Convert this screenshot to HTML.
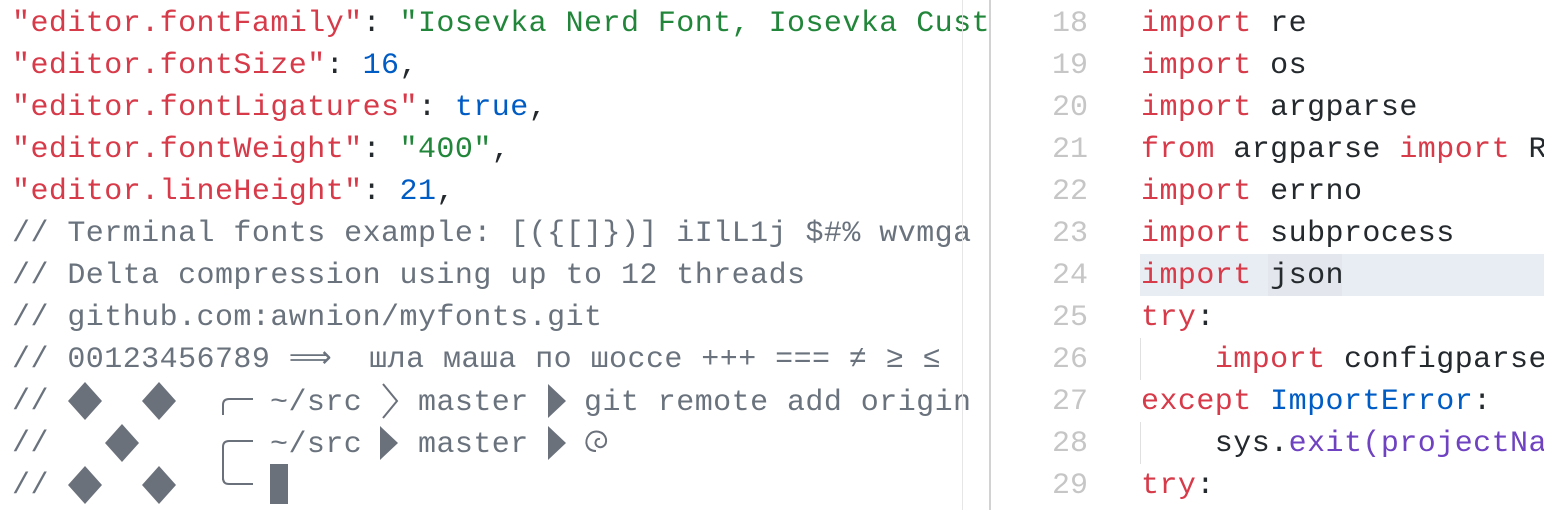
<!DOCTYPE html>
<html><head><meta charset="utf-8"><style>
html,body{margin:0;padding:0;background:#fff;width:1544px;height:510px;overflow:hidden}
body{position:relative;font-family:"Liberation Mono","DejaVu Sans Mono",monospace;font-size:30px;letter-spacing:0.45px}
.pane{position:absolute;top:3px;white-space:pre;line-height:42px}
#left{left:12px;width:976px;overflow:hidden;color:#6a737d}
.s{color:#d73a49}.g{color:#22863a}.b{color:#005cc5}.k{color:#24292e}.p{color:#6f42c1}
#nums{left:1000px;width:88px;text-align:right;color:#c6c6c6;letter-spacing:0}
#right{left:1141px;width:403px;overflow:hidden;color:#24292e}
.abs{position:absolute;white-space:pre;line-height:42px;color:#6a737d}
</style></head><body>
<div style="position:absolute;left:1140px;top:254px;width:404px;height:42px;background:#e8edf4"></div>
<div style="position:absolute;left:1268px;top:254px;width:74px;height:42px;background:#e3e6ec"></div>
<div style="position:absolute;left:1140px;top:338px;width:1px;height:42px;background:#e0e0e0"></div>
<div style="position:absolute;left:1140px;top:422px;width:1px;height:42px;background:#e0e0e0"></div>
<div class="pane" id="left"><span class="s">"editor.fontFamily"</span><span class="k">: </span><span class="g">"Iosevka Nerd Font, Iosevka Custom"</span>
<span class="s">"editor.fontSize"</span><span class="k">: </span><span class="b">16</span><span class="k">,</span>
<span class="s">"editor.fontLigatures"</span><span class="k">: </span><span class="b">true</span><span class="k">,</span>
<span class="s">"editor.fontWeight"</span><span class="k">: </span><span class="g">"400"</span><span class="k">,</span>
<span class="s">"editor.lineHeight"</span><span class="k">: </span><span class="b">21</span><span class="k">,</span>
// Terminal fonts example: [({[]})] iIlL1j $#% wvmga
// Delta compression using up to 12 threads
// github.com:awnion/myfonts.git
// 00123456789 ⟹  шла маша по шоссе +++ === ≠ ≥ ≤
//
//
//</div>
<svg style="position:absolute;left:0;top:0" width="990" height="510" fill="#6b717b" stroke="#6b717b">
<g stroke="none">
<polygon points="85,382 102,401 85,420 68,401"/><polygon points="159,382 176,401 159,420 142,401"/>
<polygon points="122,424 139,443 122,462 105,443"/>
<polygon points="85,466 102,485 85,504 68,485"/><polygon points="159,466 176,485 159,504 142,485"/>
<polygon points="548,384 566,401 548,418"/>
<polygon points="380,426 398,443 380,460"/><polygon points="548,426 566,443 548,460"/>
<rect x="270" y="464" width="18" height="40"/>
</g>
<g fill="none" stroke-width="2">
<path d="M223,415 V405 Q223,399 229,399 H253"/>
<path d="M223,480 V447 Q223,441 229,441 H253"/>
<path d="M223,470 V478 Q223,484 229,484 H253"/>
<path d="M383,384 L397,401 L383,418"/>
<path d="M596,451 C586,451 584,441 589,435 C594,429 604,431 606,439 C607,446 601,449 597,446 C594,443 596,438 600,439"/>
</g>
</svg>
<div class="abs" style="left:270px;top:382px">~/src</div>
<div class="abs" style="left:418px;top:382px">master</div>
<div class="abs" style="left:584px;top:382px">git remote add origin</div>
<div class="abs" style="left:270px;top:424px">~/src</div>
<div class="abs" style="left:418px;top:424px">master</div>
<div style="position:absolute;left:962px;top:0;width:1px;height:510px;background:#e6e6e6"></div>
<div style="position:absolute;left:989px;top:0;width:2px;height:510px;background:#d2d2d2"></div>
<div class="pane" id="nums">18
19
20
21
22
23
24
25
26
27
28
29</div>
<div class="pane" id="right"><span class="s">import</span> re
<span class="s">import</span> os
<span class="s">import</span> argparse
<span class="s">from</span> argparse <span class="s">import</span> RawTextHelpFormatter
<span class="s">import</span> errno
<span class="s">import</span> subprocess
<span class="s">import</span> json
<span class="s">try</span>:
    <span class="s">import</span> configparser
<span class="s">except</span> <span class="b">ImportError</span>:
    sys.<span class="p">exit(projectName</span>
<span class="s">try</span>:</div>
</body></html>
